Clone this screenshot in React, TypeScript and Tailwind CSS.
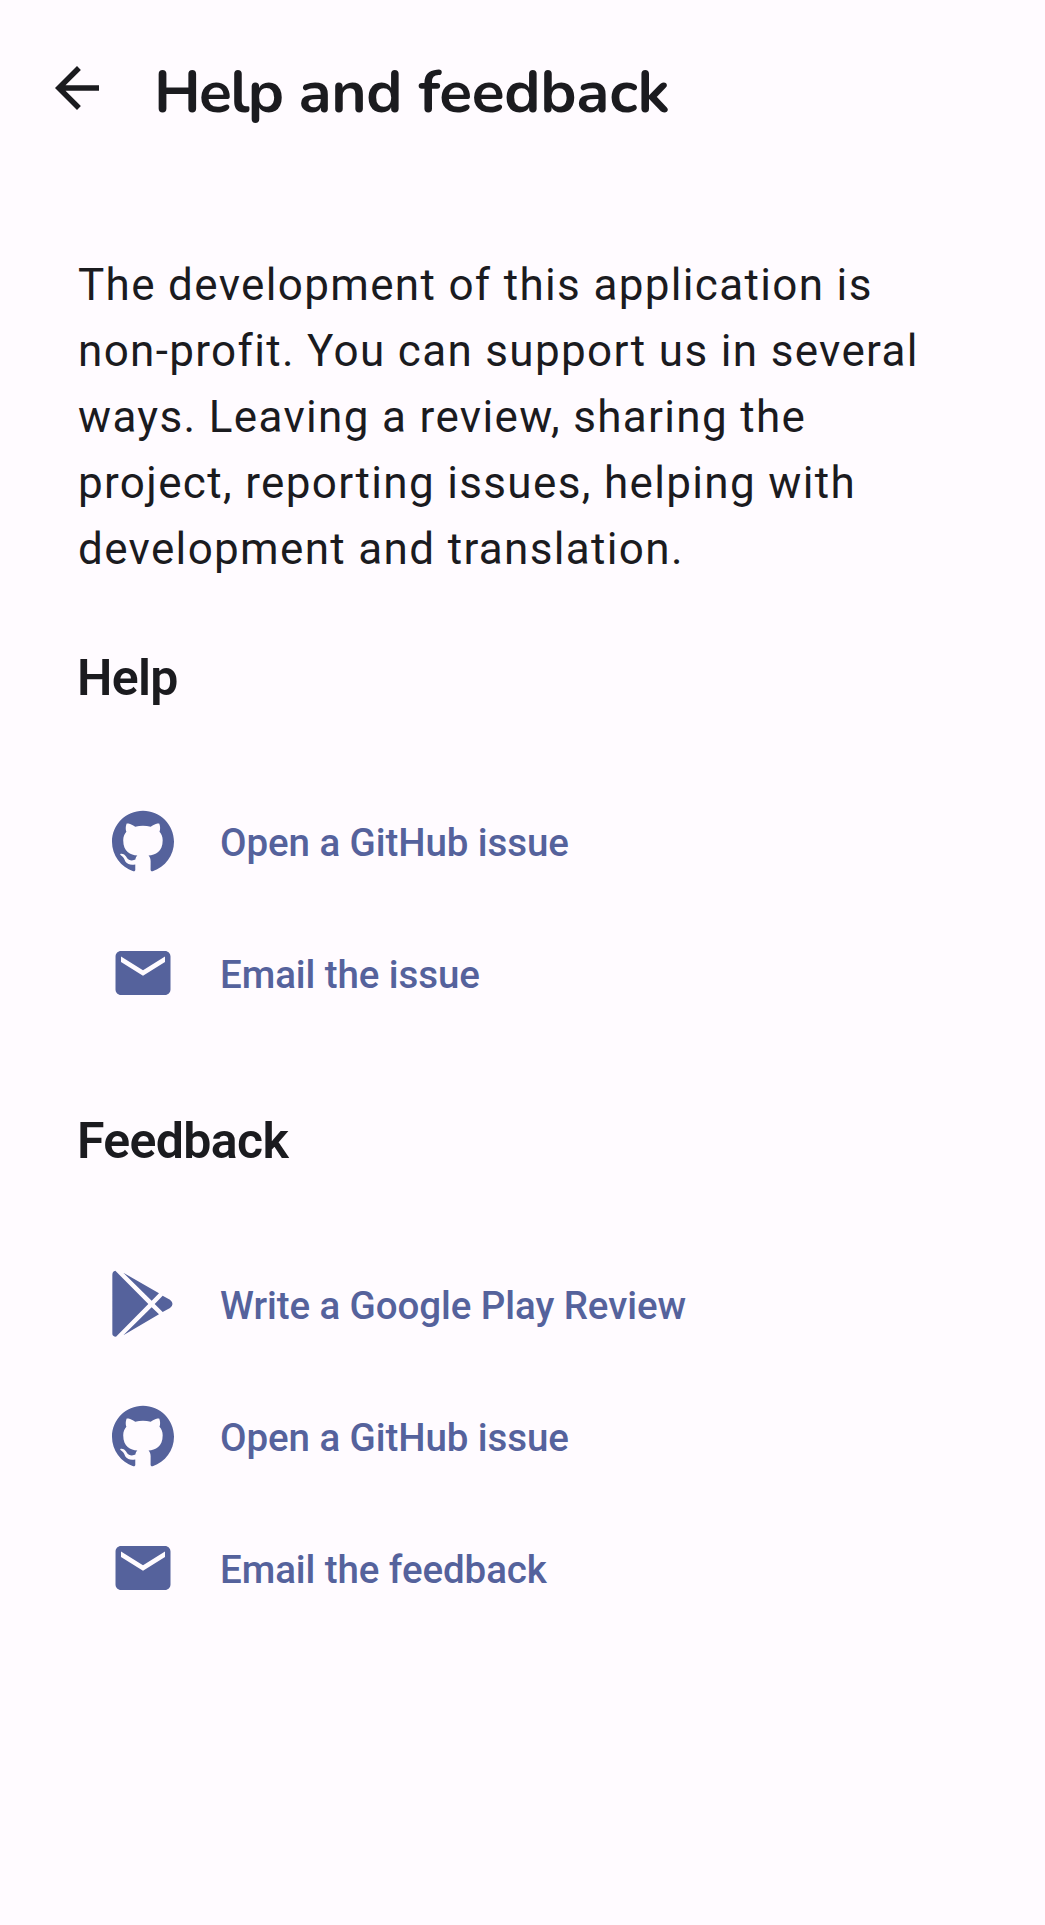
import React from "react";
import { SiGithub } from "react-icons/si";
import { MdEmail, MdArrowBack } from "react-icons/md";

type Item = { icon: React.ReactNode; label: string };

function PlayIcon() {
  return (
    <svg viewBox="60 60 198 204" className="mb-[2px] h-[68px] w-[66px]" fill="currentColor">
      <path d="M67 74Q67 64 76 62L175 162L78 260Q67 259 67 251ZM100 68L207 130L185 152ZM100 256L185 172L207 193ZM218 137L240 149Q255 162 240 174L218 186L194 162Z" />
    </svg>
  );
}

const github = <SiGithub className="mr-px mb-[2px] size-[62px]" />;
const mail = <MdEmail className="mb-[3px] size-[66px]" />;

function Section({ title, items }: { title: string; items: Item[] }) {
  return (
    <section>
      <h2 className="h-[66px] text-[50px] leading-[66px] font-semibold tracking-[-0.65px] text-[#1b1b1f]">{title}</h2>
      <ul className="mt-[65px] pl-[33px]">
        {items.map((item) => (
          <li key={item.label} className="flex h-[132px] items-center text-[#55629c]">
            <span className="flex w-[66px] justify-center">{item.icon}</span>
            <span className="mt-[2px] ml-[44px] text-[38.5px] font-medium tracking-[-0.08px] whitespace-nowrap">{item.label}</span>
          </li>
        ))}
      </ul>
    </section>
  );
}

export default function App() {
  return (
    <main className="h-[1925px] w-[1045px] overflow-hidden bg-[#fffbff] font-['Roboto',sans-serif] text-[#1b1b1f]">
      <header className="flex h-[176px] items-center pl-[44px]">
        <MdArrowBack className="size-[66px]" />
        <h1 className="mt-[8px] ml-[44px] font-['Nunito','Open_Sans',sans-serif] text-[60.5px] font-bold tracking-[-0.3px] whitespace-nowrap">
          <span className="tracking-[-1.7px]">Help</span> and feedback
        </h1>
      </header>
      <div className="px-[77px] pt-[76px]">
        <p className="pl-px text-[44px] leading-[66px] tracking-[1.34px] whitespace-nowrap">
          The development of this application is<br />
          non-profit. You can support us in several<br />
          ways. Leaving a review, sharing the<br />
          project, reporting issues, helping with<br />
          development and translation.
        </p>
        <div className="mt-[63px]">
          <Section title="Help" items={[{ icon: github, label: "Open a GitHub issue" }, { icon: mail, label: "Email the issue" }]} />
        </div>
        <div className="mt-[68px]">
          <Section
            title="Feedback"
            items={[
              { icon: <PlayIcon />, label: "Write a Google Play Review" },
              { icon: github, label: "Open a GitHub issue" },
              { icon: mail, label: "Email the feedback" },
            ]}
          />
        </div>
      </div>
    </main>
  );
}
